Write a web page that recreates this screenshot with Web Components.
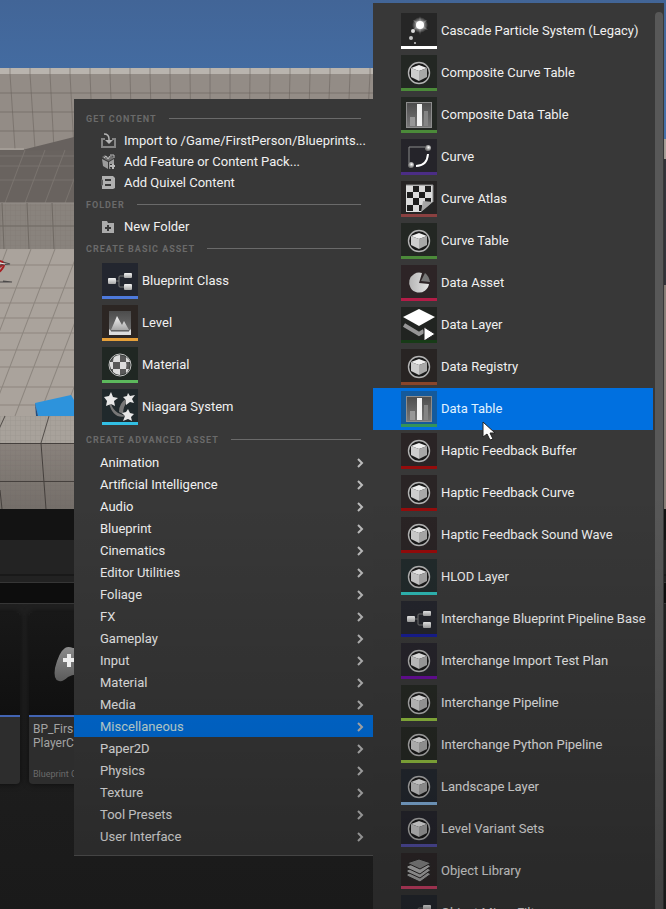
<!DOCTYPE html>
<html lang="en">
<head>
<meta charset="utf-8">
<title>Content Browser</title>
<style>
  body { margin: 0; background: #1c1c1c; font-family: Roboto, "Liberation Sans", sans-serif; }
</style>
</head>
<body>
<editor-window>
  <level-viewport slot="back"></level-viewport>
  <content-drawer slot="back">
    <asset-card></asset-card>
    <asset-card kind="Blueprint C">BP_Firs<br>PlayerC</asset-card>
  </content-drawer>

  <context-menu slot="menu" label="Add content">
    <menu-heading>GET CONTENT</menu-heading>
    <action-item icon="import">Import to /Game/FirstPerson/Blueprints...</action-item>
    <action-item icon="feature">Add Feature or Content Pack...</action-item>
    <action-item icon="quixel">Add Quixel Content</action-item>
    <menu-heading>FOLDER</menu-heading>
    <action-item icon="folder">New Folder</action-item>
    <menu-heading>CREATE BASIC ASSET</menu-heading>
    <asset-item icon="blueprint" tint="#4d79dc" shade="#23262f">Blueprint Class</asset-item>
    <asset-item icon="level" tint="#e6a03a" shade="#2c2623">Level</asset-item>
    <asset-item icon="material" tint="#5cb85c" shade="#202723">Material</asset-item>
    <asset-item icon="niagara" tint="#32bfe4" shade="#20292c">Niagara System</asset-item>
    <menu-heading>CREATE ADVANCED ASSET</menu-heading>
    <category-item>Animation</category-item>
    <category-item>Artificial Intelligence</category-item>
    <category-item>Audio</category-item>
    <category-item>Blueprint</category-item>
    <category-item>Cinematics</category-item>
    <category-item>Editor Utilities</category-item>
    <category-item>Foliage</category-item>
    <category-item>FX</category-item>
    <category-item>Gameplay</category-item>
    <category-item>Input</category-item>
    <category-item>Material</category-item>
    <category-item>Media</category-item>
    <category-item open>Miscellaneous</category-item>
    <category-item>Paper2D</category-item>
    <category-item>Physics</category-item>
    <category-item>Texture</category-item>
    <category-item>Tool Presets</category-item>
    <category-item>User Interface</category-item>
  </context-menu>

  <scroll-menu slot="menu" label="Miscellaneous">
    <asset-item icon="cascade" tint="#ffffff" shade="#262626">Cascade Particle System (Legacy)</asset-item>
    <asset-item icon="cube" tint="#4b8a39" shade="#232723">Composite Curve Table</asset-item>
    <asset-item icon="table" tint="#4b8a39" shade="#232723">Composite Data Table</asset-item>
    <asset-item icon="curve" tint="#4b2d85" shade="#25242a">Curve</asset-item>
    <asset-item icon="atlas" tint="#8a4040" shade="#262424">Curve Atlas</asset-item>
    <asset-item icon="cube" tint="#4b8a39" shade="#232723">Curve Table</asset-item>
    <asset-item icon="pie" tint="#b31c47" shade="#2d2426">Data Asset</asset-item>
    <asset-item icon="layer" tint="#173b17" shade="#212421">Data Layer</asset-item>
    <asset-item icon="cube" tint="#8a452a" shade="#282423">Data Registry</asset-item>
    <asset-item icon="table" tint="#34935a" shade="#145a9c" selected>Data Table</asset-item>
    <asset-item icon="cube" tint="#940c0c" shade="#2a2425">Haptic Feedback Buffer</asset-item>
    <asset-item icon="cube" tint="#940c0c" shade="#2a2425">Haptic Feedback Curve</asset-item>
    <asset-item icon="cube" tint="#960a0a" shade="#2a2425">Haptic Feedback Sound Wave</asset-item>
    <asset-item icon="cube" tint="#2fbab6" shade="#222b2c">HLOD Layer</asset-item>
    <asset-item icon="blueprint" tint="#181e94" shade="#25262d">Interchange Blueprint Pipeline Base</asset-item>
    <asset-item icon="cube" tint="#690e9c" shade="#27252c">Interchange Import Test Plan</asset-item>
    <asset-item icon="cube" tint="#92bf40" shade="#262924">Interchange Pipeline</asset-item>
    <asset-item icon="cube" tint="#92bf40" shade="#262924">Interchange Python Pipeline</asset-item>
    <asset-item icon="cube" tint="#86b5e2" shade="#252a31">Landscape Layer</asset-item>
    <asset-item icon="cube" tint="#5450a8" shade="#27272f">Level Variant Sets</asset-item>
    <asset-item icon="library" tint="#d2426a" shade="#2f292a">Object Library</asset-item>
    <asset-item icon="blueprint" tint="#4d79dc" shade="#262a31">Object Mixer Filter</asset-item>
  </scroll-menu>
</editor-window>

<script>
const ICONS = {
  import: `<path d="M4 6H1v8h13V6h-3" fill="none" stroke="#858585" stroke-width="2"/><path d="M3 1c3 0 5 1 5 5v3" fill="none" stroke="#b4b4b4" stroke-width="1.500"/><path d="M4 7h8l-4 4z" fill="#b4b4b4"/>`,
  feature: `<path d="M1 5l6 3v7l-5-3zM8 8l5-3v5l-2 4-3 1z" fill="#9c9c9c"/><path d="M1 3l3-2 3 2 3-2 3 3-5 3-3-1z" fill="#707070"/><path d="M3 4l2-2 2 3 2-3M9 1h4v3" fill="none" stroke="#bbb"/><path d="M12 10v5M9 12h5" stroke="#383838" stroke-width="4"/><path d="M12 10v5M9 12h5" stroke="#b8b8b8" stroke-width="2"/>`,
  quixel: `<path d="M1 1h11l2 2v10l-2 1H1z" fill="#b0b0b0"/><path d="M4 5h6M4 10h6" stroke="#383838" stroke-width="2"/><path d="M0 4l2 1v5l-2 1z" fill="#5a5a5a"/>`,
  folder: `<path d="M1 2h5l1 2h6v10H1z" fill="#ababab"/><path d="M7 6v6M4 9h6" stroke="#383838" stroke-width="2"/>`,
  blueprint: `<path d="M13 18h4M23 13h-5q-1 0-1 1v9q0 1 1 1h5" fill="none" stroke="#777"/><g fill="url(#g)"><rect x="6" y="15" width="8" height="6" rx="1"/><rect x="22" y="10" width="8" height="5" rx="1"/><rect x="22" y="21" width="8" height="6" rx="1"/></g>`,
  level: `<rect x="7" y="6" width="22" height="24" fill="url(#d)"/><path d="M9 25l6-14 5 9 2-4 5 9z" fill="url(#g)"/><path d="M7 24l2 2h18l2-2v6H7z" fill="#ddd"/><path d="M9 26h18" stroke="#555"/>`,
  material: `<circle cx="18" cy="18" r="10" fill="#595959"/><path d="M12 10q3-2 6-2v7h-7q0-3 1-5M18 15h6q1 3 0 7h-6zM11 22h7v6q-4 0-7-3zM24 10q4 3 4 5h-4zM8 15h3v7H9q-2-4-1-7M24 22h3q-1 3-3 4z" fill="#dcdcdc"/><circle cx="18" cy="18" r="11" fill="none" stroke="#c2c2c2"/>`,
  niagara: `<path d="M9 13q1 11 16 14-14 4-18-13zM17 23q0-9 8-14l1 3q-5 5-5 13z" fill="#777"/><g fill="#e8e8e8"><path d="M9 3l2 5 5 1-4 3 1 5-4-2-5 2 1-5-3-4 5-1z"/><path d="M26 4l2 3 5-1-3 4 2 4-4-1-4 3v-5l-3-3 4-1z"/><path d="M26 20l2 4 4 1-3 3 1 4-4-2-5 2 2-5-3-3 4-1z"/></g>`,
  cascade: `<circle cx="19" cy="12" r="8" fill="url(#r)"/><path d="M19 3l1 6 6-2-4 5 5 5-7-2-1 7-1-7-6 2 4-5-4-5 6 2z" fill="#ccc" opacity=".35"/><circle cx="19" cy="12" r="4" fill="#fff"/><circle cx="12" cy="18" r="2" fill="#ddd"/><circle cx="10" cy="25" r="2" fill="#c5c5c5"/><circle cx="14" cy="30" r="1" fill="#ccc"/>`,
  cube: `<circle cx="18" cy="18" r="10.500" fill="#191919" stroke="#b4b4b4" stroke-width="1.400"/><path d="M10 13l8-3 8 3-8 3z" fill="#eee"/><path d="M10 13l8 3v10l-8-4z" fill="#cdcdcd"/><path d="M26 13l-8 3v10l8-4z" fill="#a8a8a8"/>`,
  table: `<rect x="5.500" y="5.500" width="25" height="25" fill="url(#d)" stroke="#8d8d8d"/><path d="M9 20h5v9H9z" fill="#979797"/><path d="M16 7h5v22h-5z" fill="#f2f2f2"/><path d="M23 14h4v15h-4z" fill="#858585"/>`,
  curve: `<path d="M8 24V8h16" fill="none" stroke="#8a8a8a"/><path d="M15 27q11 0 12-12" fill="none" stroke="#fff" stroke-width="2"/><circle cx="27" cy="9" r="3" fill="url(#b)"/><circle cx="10" cy="26" r="3" fill="url(#b)"/>`,
  atlas: `<path d="M5 4h27v17L21 31H5z" fill="#dcdcdc"/><path d="M12 5h6v6h-6zM24 5h6v6h-6zM6 11h6v6H6zM18 11h6v6h-6zM12 17h6v7h-6zM24 17h6v4h-6zM6 24h6v6H6zM18 24h3v6h-3z" fill="#1e1e1e"/><path d="M20 31l2-11 10 1z" fill="#a5a5a5"/><path d="M20 31l12-10v10z" fill="#252525"/><path d="M5 4h27v17" fill="none" stroke="#888"/>`,
  pie: `<path d="M18 18l3-10a10 10 0 1 0 7 11z" fill="url(#h)"/><path d="M20 16l4-8q4 3 5 9z" fill="#777"/>`,
  layer: `<path d="M2 10L18 2l16 8-16 9z" fill="#fff"/><path d="M3 18l15 9 5-3" fill="none" stroke="#969696" stroke-width="4"/><path d="M23 20l11 7-11 7z" fill="#fff" stroke="#242424"/>`,
  library: `<g stroke="#292627"><path d="M6 21l14-5 10 5-11 8-13-6z" fill="#aaa"/><path d="M6 17l14-5 10 5-11 8-13-6z" fill="#b3b3b3"/><path d="M6 13l14-5 10 5-11 8-13-6z" fill="#bababa"/><path d="M6 10l12-4 12 4-11 6z" fill="#8c8c8c"/></g>`
};

/* Shared gradients for the asset thumbnails */
const DEFS = `<defs>
  <linearGradient id="g" x2="0" y2="1"><stop stop-color="#f4f4f4"/><stop offset="1" stop-color="#a6a6a6"/></linearGradient>
  <linearGradient id="d" x2="0" y2="1"><stop stop-color="#4c4c4c"/><stop offset="1" stop-color="#787878"/></linearGradient>
  <linearGradient id="h"><stop stop-color="#b5b5b5"/><stop offset="1" stop-color="#e5e5e5"/></linearGradient>
  <radialGradient id="r"><stop stop-color="#fff"/><stop offset="1" stop-color="#fff" stop-opacity="0"/></radialGradient>
  <radialGradient id="b" cx=".6" cy=".4"><stop stop-color="#fff"/><stop offset="1" stop-color="#777"/></radialGradient>
</defs>`;

class Base extends HTMLElement {
  connectedCallback() {
    if (this.shadowRoot) return;
    this.attachShadow({ mode: 'open' }).innerHTML = this.render();
  }
}

customElements.define('editor-window', class extends Base {
  render() {
    return `<style>
      :host { display: block; position: relative; height: 100vh; overflow: hidden; }
      .back { display: flex; flex-direction: column; height: 100%; }
      .menus { position: absolute; inset: 0; display: grid; grid-template-columns: 299px 1fr;
               grid-template-rows: 100%; align-items: start; padding: 0 2px 0 74px; }
    </style>
    <div class="back"><slot name="back"></slot></div>
    <div class="menus"><slot name="menu"></slot></div>`;
  }
});

customElements.define('level-viewport', class extends Base {
  render() {
    let wall = '', back = '', top = '';
    for (let i = 0; i < 20; i++) {
      const x = 10 + i * 20;
      wall += `M${x} 68v6l${5 - Math.floor(i / 2)} 75`;
      back += `M${x + 15} 150l-20 53`;
      top += `M${i * 24 - 17} 249l-64 167`;
    }
    return `<style>
      :host { display: block; flex: 0 0 56%; min-height: 0; }
      svg { display: block; width: 100%; height: 100%; }
    </style>
    <svg viewBox="0 0 666 509" preserveAspectRatio="xMinYMin slice" aria-hidden="true">
      <defs>
        <linearGradient id="sky" x2="0" y2="1"><stop stop-color="#426597"/><stop offset="1" stop-color="#4572ab"/></linearGradient>
        <linearGradient id="front" x2="0" y2="1"><stop stop-color="#89827c"/><stop offset="1" stop-color="#746e69"/></linearGradient>
        <pattern id="fine" width="5" height="5" patternUnits="userSpaceOnUse"><path d="M0 0h5M0 0v5" stroke="#5f5953" stroke-opacity=".14"/></pattern>
        <clipPath id="left"><rect width="74" height="509"/></clipPath>
      </defs>
      <rect width="666" height="140" fill="url(#sky)"/>
      <rect y="68" width="373" height="6" fill="#b9b4ae"/>
      <rect y="74" width="373" height="76" fill="#938c86"/>
      <path d="M0 93h373M0 112h373M0 131h373" stroke="#7b736d"/>
      <path d="${wall}" fill="none" stroke="#69625c" stroke-opacity=".55"/>
      <path d="M22 150l52-13v13z" fill="#67615e"/>
      <g clip-path="url(#left)">
        <rect y="150" width="74" height="53" fill="#69635f"/>
        <path d="${back}M0 156h74M0 166h74M0 180h74" fill="none" stroke="#79736e"/>
        <path d="M0 149h24" stroke="#b3ada6"/>
        <rect y="203" width="74" height="46" fill="#89837d"/>
        <rect y="203" width="74" height="46" fill="url(#fine)"/>
        <path d="M0 203h74" stroke="#97918b"/>
        <path d="M0 226h74M2 203l2 46M27 203l2 46M52 203l2 46" stroke="#6f6963"/>
        <rect y="249" width="74" height="167" fill="#aaa39c"/>
        <path d="${top}M0 265h74M0 288h74M0 303h74M0 318h74M0 333h74M0 350h74M0 367h74M0 387h74M0 405h74" fill="none" stroke="#8d867f"/>
        <path d="M35 403l36-8 3 5v16H38z" fill="#2d93dc"/><path d="M35 403l3 13h-2z" fill="#234e80"/>
        <rect y="416" width="74" height="27" fill="#a8a29b"/>
        <rect y="416" width="74" height="27" fill="url(#fine)"/>
        <path d="M5 416l-6 13M49 416l-8 27" stroke="#55504c"/>
        <rect y="443" width="74" height="66" fill="url(#front)"/>
        <rect y="443" width="74" height="66" fill="url(#fine)"/>
        <path d="M0 443.500h74M0 481.500h74M41 443l5 66M0 490l2 19" stroke="#45403d"/>
        <path d="M0 261q7 2 2 8-2 3-4 3M0 267l4-4" fill="none" stroke="#a81e22" stroke-width="2"/>
        <path d="M0 265l10-1-7-2M0 282l12 0-9-1" fill="none" stroke="#4c4a4a"/>
        <path d="M0 263l5 1" stroke="#e8e8e8"/>
      </g>
      <path d="M664 139h2v20h-2z" fill="#a8a099"/><path d="M664 159h2v126h-2z" fill="#34343a"/>
      <path d="M664 285h2v224h-2z" fill="#8b8079"/>
    </svg>`;
  }
});

customElements.define('content-drawer', class extends Base {
  render() {
    return `<style>
      :host { display: flex; flex-direction: column; flex: 1; min-height: 0; background: linear-gradient(#222, #1a1a1a); }
      .tabs { height: 31px; background: #131313; }
      .tools { height: 34px; background: #232323; border-bottom: 2px solid #191919; }
      .gap { height: 6px; background: #222; border-bottom: 1px solid #363636; }
      .path { height: 20px; background: #0d0d0d; border-bottom: 1px solid #363636; }
      .cards { display: flex; gap: 9px; padding-top: 8px; margin-left: -71px; }
    </style>
    <div class="tabs"></div><div class="tools"></div><div class="gap"></div><div class="path"></div>
    <div class="cards"><slot></slot></div>`;
  }
});

customElements.define('asset-card', class extends Base {
  render() {
    const kind = this.getAttribute('kind') || '';
    const pad = kind ? `<svg width="45" height="38" viewBox="0 0 45 38" aria-hidden="true">
      <defs><linearGradient id="p" x2="0" y2="1"><stop stop-color="#8c8c8c"/><stop offset="1" stop-color="#5b5b5b"/></linearGradient></defs>
      <path d="M12 2q3-2 8 0h8q5-2 8 0 4 4 7 20 2 12-3 13-4 1-9-4-8-5-16 0-5 5-9 4-6-1-4-13Q6 6 12 2z" fill="url(#p)"/>
      <path d="M16 8v13M10 14h13" stroke="#eee" stroke-width="4"/></svg>` : '';
    return `<style>
      :host { display: flex; flex-direction: column; box-sizing: border-box; width: 91px; height: 172px; border-radius: 4px;
              overflow: hidden; background: #2d2d2d; color: #a3a3a3; box-shadow: 0 0 6px #0009; }
      .thumb { height: 103px; background: linear-gradient(#181818, #101010); border-bottom: 2px solid #4264b3; }
      svg { display: block; margin: 34px 0 0 24px; }
      .name { font-size: 12px; line-height: 14px; padding: 5px 4px 0; flex: 1; }
      .kind { font-size: 9px; line-height: 12px; padding: 0 4px 4px; color: #6b6b6b; }
    </style>
    <div class="thumb">${pad}</div><div class="name"><slot></slot></div><div class="kind">${kind}</div>`;
  }
});

const PANEL = `
  :host { display: block; position: relative; box-sizing: border-box; background: #383838; }
  :host::after { content: ""; position: absolute; inset: 0; pointer-events: none; }`;

customElements.define('context-menu', class extends Base {
  render() {
    this.setAttribute('role', 'menu');
    this.setAttribute('aria-label', this.getAttribute('label'));
    return `<style>${PANEL}
      :host { margin-top: 99px; padding: 8px 0; border-bottom: 1px solid #444; }
      :host::after { background: linear-gradient(transparent 53%, #0000003d); }
    </style><slot></slot>`;
  }
});

customElements.define('scroll-menu', class extends Base {
  render() {
    this.setAttribute('role', 'menu');
    this.setAttribute('aria-label', this.getAttribute('label'));
    return `<style>${PANEL}
      :host { display: flex; height: calc(100% - 3px); margin-top: 3px; padding-top: 7px; overflow: hidden; }
      :host::after { background: linear-gradient(transparent 54%, #00000047); }
      .list { flex: 1; min-width: 0; }
      .bar { width: 8px; margin: 2px 1px 0 2px; border-radius: 4px 4px 0 0; background: #585858; }
    </style><div class="list"><slot></slot></div><div class="bar"></div>`;
  }
});

customElements.define('menu-heading', class extends Base {
  render() {
    return `<style>
      :host { display: flex; align-items: center; gap: 12px; height: 23px; padding: 0 12px;
              font-size: 9px; font-weight: 700; letter-spacing: 1px; color: #6a6a6a; white-space: nowrap; }
      i { flex: 1; height: 1px; background: #6a6a6a; }
    </style><slot></slot><i></i>`;
  }
});

const BUTTON = `
  :host { display: block; }
  button { display: flex; align-items: center; box-sizing: border-box; width: 100%; margin: 0; border: 0; background: none;
           font: 13px/20px Roboto, "Liberation Sans", sans-serif; color: #f0f0f0; text-align: left; white-space: nowrap; }`;

customElements.define('action-item', class extends Base {
  render() {
    return `<style>${BUTTON}
      button { height: 21px; gap: 8px; padding: 0 0 0 27px; }
      svg { flex: none; }
    </style>
    <button role="menuitem"><svg width="15" height="15" viewBox="0 0 15 15" aria-hidden="true">${ICONS[this.getAttribute('icon')]}</svg><span><slot></slot></span></button>`;
  }
});

customElements.define('category-item', class extends Base {
  render() {
    return `<style>${BUTTON}
      button { height: 22px; justify-content: space-between; padding: 2px 9px 0 26px; }
      :host([open]) button { background: #0070e0; color: #cfe6e6; }
    </style>
    <button role="menuitem" aria-haspopup="menu"><span><slot></slot></span><svg width="8" height="10" viewBox="0 0 8 10" aria-hidden="true"><path d="M2 1l4 4-4 4" fill="none" stroke="#bcbcbc" stroke-width="2"/></svg></button>`;
  }
});

customElements.define('asset-item', class extends Base {
  render() {
    const selected = this.hasAttribute('selected');
    const pointer = selected ? `<svg class="pointer" width="14" height="20" viewBox="0 0 14 20" aria-hidden="true"><path d="M1 1v15l4-3 3 6 3-1-3-6h5z" fill="#fff" stroke="#222"/></svg>` : '';
    return `<style>${BUTTON}
      :host { position: relative; }
      button { height: 42px; gap: 4px; padding: 0 0 0 28px; }
      .thumb { flex: none; box-sizing: border-box; width: 36px; height: 36px; overflow: hidden;
               background: ${this.getAttribute('shade')}; border-bottom: 3px solid ${this.getAttribute('tint')}; }
      .thumb svg { display: block; }
      :host([selected]) button { background: #0070e0; color: #e0f2ff; }
      .pointer { position: absolute; left: 109px; top: 33px; z-index: 1; }
    </style>
    <button role="menuitem"><span class="thumb"><svg width="36" height="36" viewBox="0 0 36 36" aria-hidden="true">${DEFS}${ICONS[this.getAttribute('icon')]}</svg></span><span><slot></slot></span></button>${pointer}`;
  }
});
</script>
</body>
</html>
